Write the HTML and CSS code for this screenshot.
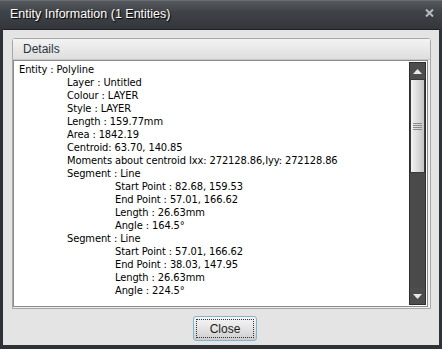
FILE: index.html
```html
<!DOCTYPE html>
<html lang="en">
<head>
    <meta charset="UTF-8">
    <title>Entity Information</title>
    <link rel="stylesheet" href="styles.css">
</head>
<body>
    <div class="window">
        <div class="titlebar">
            <span class="title">Entity Information (1 Entities)</span>
            <svg class="close-x" width="9" height="8" viewBox="0 0 9 8">
                <path d="M1 0.5 L8 7.5 M8 0.5 L1 7.5" stroke="#b8bcc2" stroke-width="2"/>
            </svg>
        </div>
        <div class="client">
            <div class="group">
                <div class="group-header">Details</div>
                <div class="textbox">
                    <div class="lines">
                        <div>Entity : Polyline</div>
                        <div class="ind1">Layer : Untitled</div>
                        <div class="ind1">Colour : LAYER</div>
                        <div class="ind1">Style : LAYER</div>
                        <div class="ind1">Length : 159.77mm</div>
                        <div class="ind1">Area : 1842.19</div>
                        <div class="ind1">Centroid: 63.70, 140.85</div>
                        <div class="ind1">Moments about centroid Ixx: 272128.86,Iyy: 272128.86</div>
                        <div class="ind1">Segment : Line</div>
                        <div class="ind2">Start Point : 82.68, 159.53</div>
                        <div class="ind2">End Point : 57.01, 166.62</div>
                        <div class="ind2">Length : 26.63mm</div>
                        <div class="ind2">Angle : 164.5°</div>
                        <div class="ind1">Segment : Line</div>
                        <div class="ind2">Start Point : 57.01, 166.62</div>
                        <div class="ind2">End Point : 38.03, 147.95</div>
                        <div class="ind2">Length : 26.63mm</div>
                        <div class="ind2">Angle : 224.5°</div>
                    </div>
                    <div class="scrollbar">
                        <div class="sb-btn">
                            <svg width="9" height="5" viewBox="0 0 9 5"><path d="M4.5 0 L9 5 L0 5 Z" fill="#e8e8e8"/></svg>
                        </div>
                        <div class="sb-thumb">
                            <span></span><span></span><span></span><span></span>
                        </div>
                        <div class="sb-track"></div>
                        <div class="sb-btn">
                            <svg width="9" height="5" viewBox="0 0 9 5"><path d="M0 0 L9 0 L4.5 5 Z" fill="#e8e8e8"/></svg>
                        </div>
                    </div>
                </div>
            </div>
            <div class="footer">
                <button class="btn"><span class="focus">Close</span></button>
            </div>
        </div>
    </div>
</body>
</html>
```

FILE: styles.css
```css
body {
    margin: 0;
    background-color: #2c2f33;
    font-family: "DejaVu Sans Condensed", "DejaVu Sans", sans-serif;
    font-size: 11px;
}
.window {
    width: 442px;
    height: 349px;
    display: flex;
    flex-direction: column;
    background: #2e3135;
}
.titlebar {
    height: 29px;
    flex: none;
    display: flex;
    align-items: center;
    justify-content: space-between;
    padding: 0 8px 2px 10px;
    box-sizing: border-box;
    background: linear-gradient(#55585d, #3f4247 40%, #33363a);
    border-top: 1px solid #6a6d72;
}
.title {
    color: #ffffff;
    font-family: "Liberation Sans", sans-serif;
    font-size: 12.5px;
    text-shadow: 1px 1px 1px #000;
}
.close-x {
    margin-top: -2px;
}
.client {
    flex: 1;
    margin: 0 3px 4px 3px;
    background: #e4e4e4;
    padding: 8px 8px 0 9px;
    display: flex;
    flex-direction: column;
    border-top: 1px solid #1f2124;
}
.group {
    border: 1px solid #a8a8a8;
    border-radius: 3px 3px 0 0;
    background: #f0f0f0;
    display: flex;
    flex-direction: column;
    height: 271px;
    box-sizing: border-box;
}
.group-header {
    height: 20px;
    line-height: 20px;
    padding-left: 10px;
    color: #2b3442;
    font-family: "Liberation Sans", sans-serif;
    font-size: 12px;
    background: linear-gradient(#f3f3f3, #dedede);
    border-bottom: 1px solid #c8c8c8;
}
.textbox {
    flex: 1;
    display: flex;
    background: #ffffff;
    border: 1px solid #8a8a8a;
    margin: 0 2px 1px 0;
    overflow: hidden;
}
.lines {
    flex: 1;
    padding: 2px 0 0 5px;
    line-height: 13px;
    letter-spacing: -0.1px;
    color: #000;
    white-space: nowrap;
    overflow: hidden;
}
.ind1 {
    padding-left: 48px;
}
.ind2 {
    padding-left: 96px;
}
.scrollbar {
    width: 17px;
    margin: 1px;
    display: flex;
    flex-direction: column;
    background: #4a4a4a;
    border: 1px solid #2e2e2e;
    box-sizing: border-box;
}
.sb-btn {
    height: 16px;
    display: flex;
    align-items: center;
    justify-content: center;
    background: #4d4d4d;
}
.sb-thumb {
    height: 92px;
    background: linear-gradient(to right, #f2f2f2, #dcdcdc 50%, #c4c4c4);
    border: 1px solid #3a3a3a;
    display: flex;
    flex-direction: column;
    justify-content: center;
    align-items: center;
    gap: 1px;
}
.sb-thumb span {
    width: 9px;
    height: 1px;
    background: #8a8a8a;
}
.sb-track {
    flex: 1;
    background: #4a4a4a;
}
.footer {
    padding: 7px 0 0 181px;
}
.btn {
    width: 64px;
    height: 25px;
    padding: 2px;
    border: 1px solid #7eb4d2;
    border-radius: 3px;
    background: linear-gradient(#f6f6f6, #e6e6e6 45%, #cdcdcd);
    font-family: "Liberation Sans", sans-serif;
    font-size: 12px;
    color: #1b1b1b;
}
.focus {
    display: block;
    height: 19px;
    line-height: 18px;
    border: 1px dotted #333;
    box-sizing: border-box;
}
```
